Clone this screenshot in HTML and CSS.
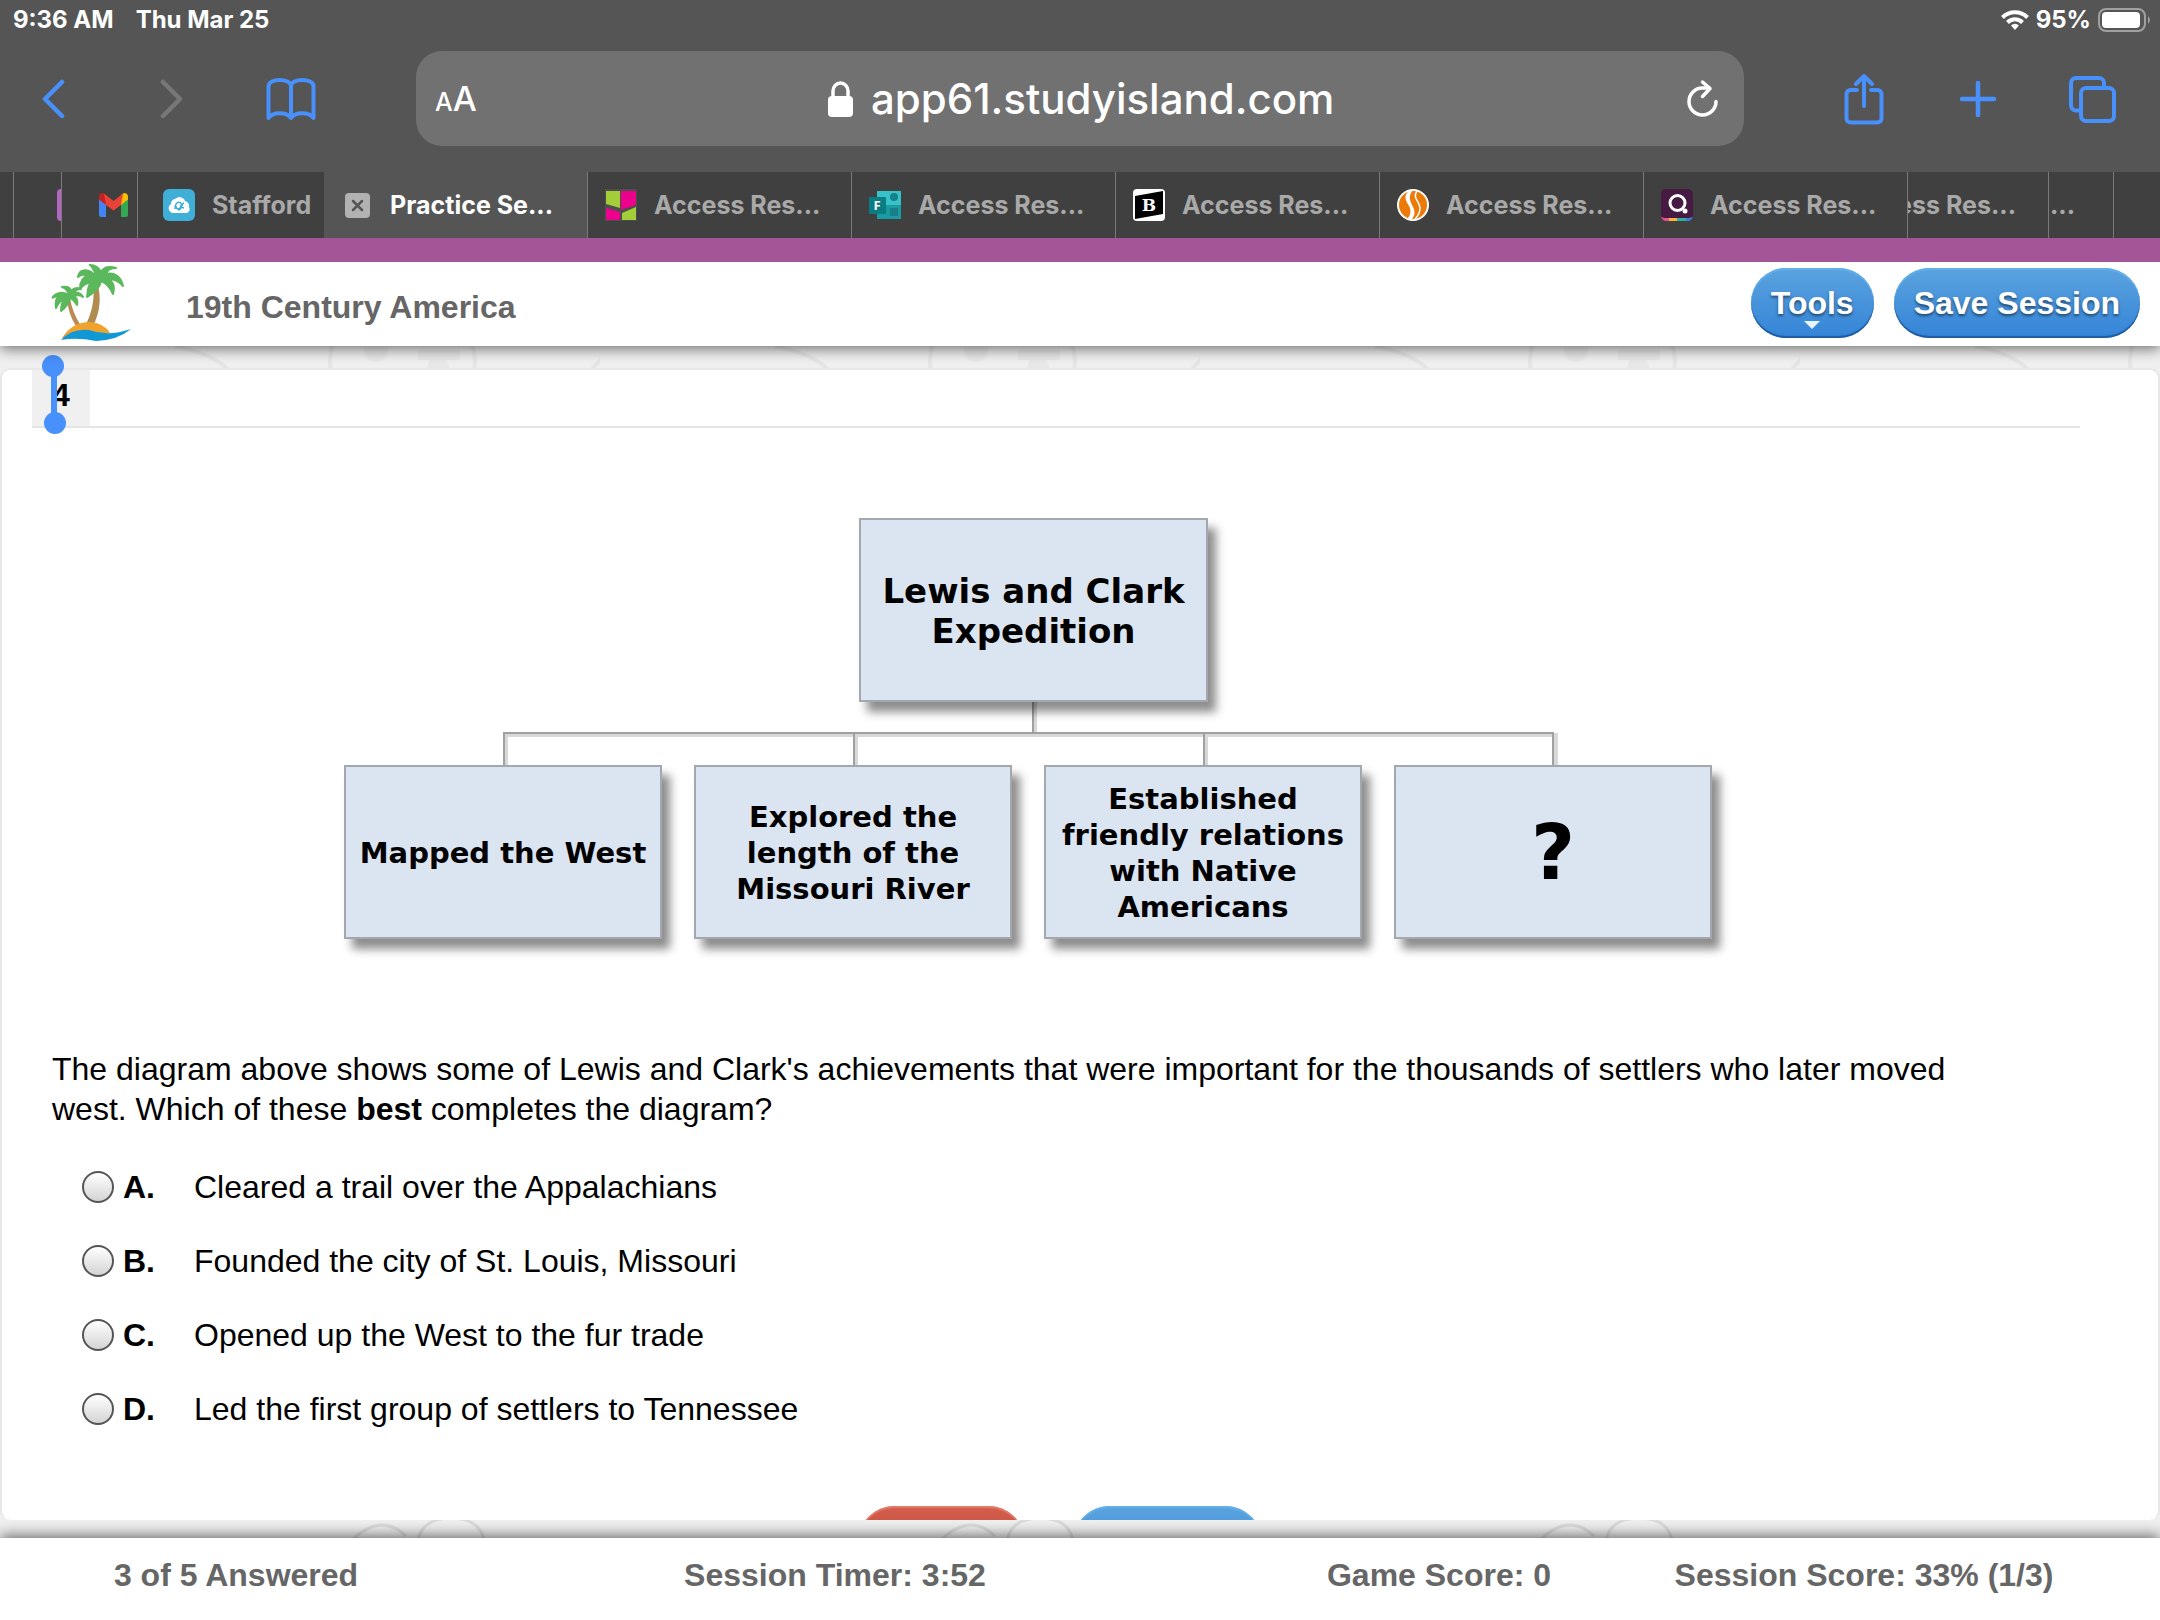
FILE: index.html
```html
<!DOCTYPE html>
<html lang="en">
<head>
    <meta charset="UTF-8">
    <meta name="viewport" content="width=device-width, initial-scale=1.0">
    <title>Practice Session</title>
    <link rel="stylesheet" href="styles.css">
</head>
<body>
    <div class="browser">
        <div class="status-bar">
            <span>9:36 AM</span>
            <span>Thu Mar 25</span>
            <div class="status-right">
                <svg width="28" height="22" viewBox="0 0 28 22">
                    <g fill="none" stroke="#fff" stroke-width="4">
                        <path d="M1.500 8.500a17.500 17.500 0 0 1 25 0"/>
                        <path d="M6.500 13.500a10.500 10.500 0 0 1 15 0"/>
                    </g>
                    <path d="M14 21l-4-4.500a5.600 5.600 0 0 1 8 0z" fill="#fff"/>
                </svg>
                <span>95%</span>
                <svg width="54" height="24" viewBox="0 0 54 24">
                    <rect x="1" y="1" width="46" height="22" rx="7" fill="none" stroke="#a0a0a0" stroke-width="2"/>
                    <rect x="4" y="4" width="38" height="16" rx="4" fill="#fff"/>
                    <path d="M50 8q4 4 0 8z" fill="#a0a0a0"/>
                </svg>
            </div>
        </div>

        <div class="toolbar">
            <div class="toolbar-group left">
                <button type="button" aria-label="Back">
                    <svg width="24" height="40" viewBox="0 0 24 40"><path d="M21 3L4 20l17 17" fill="none" stroke="#4890fb" stroke-width="4.500" stroke-linecap="round" stroke-linejoin="round"/></svg>
                </button>
                <button type="button" aria-label="Forward">
                    <svg width="24" height="40" viewBox="0 0 24 40"><path d="M3 3l17 17L3 37" fill="none" stroke="#777" stroke-width="4.500" stroke-linecap="round" stroke-linejoin="round"/></svg>
                </button>
                <button type="button" aria-label="Bookmarks">
                    <svg width="50" height="44" viewBox="0 0 50 44"><path d="M2.500 41V9c0-8 22.500-8 22.500 0v32C21 34.500 6.500 34.500 2.500 41zM25 9c0-8 22.500-8 22.500 0v32C43.500 34.500 29 34.500 25 41" fill="none" stroke="#4890fb" stroke-width="4" stroke-linejoin="round"/></svg>
                </button>
            </div>
            <div class="address-bar">
                <button type="button" class="text-size" aria-label="Text size"><small>A</small>A</button>
                <div class="address">
                    <svg width="25" height="36" viewBox="0 0 25 36">
                        <path d="M5 17V10a7.500 8 0 0 1 15 0v7" fill="none" stroke="#fff" stroke-width="3.500"/>
                        <rect x="0" y="15" width="25" height="21" rx="4" fill="#fff"/>
                    </svg>
                    <input type="text" aria-label="Address" value="app61.studyisland.com">
                </div>
                <button type="button" class="reload" aria-label="Reload">
                    <svg width="34" height="40" viewBox="0 0 34 40">
                        <path d="M30 22.500a13.500 13.500 0 1 1-13.500-13.500h7" fill="none" stroke="#fff" stroke-width="3.500" stroke-linecap="round"/>
                        <path d="M16.500 3l7.500 6.500-7.500 8" fill="none" stroke="#fff" stroke-width="3.500" stroke-linecap="round" stroke-linejoin="round"/>
                    </svg>
                </button>
            </div>
            <div class="toolbar-group">
                <button type="button" aria-label="Share">
                    <svg width="40" height="52" viewBox="0 0 40 52"><path d="M13 17H6.500a4 4 0 0 0-4 4v24.500a4 4 0 0 0 4 4h27a4 4 0 0 0 4-4V21a4 4 0 0 0-4-4H27M20 33V4M12 11l8-8 8 8" fill="none" stroke="#4890fb" stroke-width="4" stroke-linecap="round" stroke-linejoin="round"/></svg>
                </button>
                <button type="button" aria-label="New tab">
                    <svg width="36" height="36" viewBox="0 0 36 36"><path d="M18 2v32M2 18h32" stroke="#4890fb" stroke-width="4.500" stroke-linecap="round"/></svg>
                </button>
                <button type="button" aria-label="Show tabs">
                    <svg width="48" height="48" viewBox="0 0 48 48" fill="none" stroke="#4890fb" stroke-width="4">
                        <rect x="13" y="13" width="33" height="33" rx="5"/>
                        <path d="M13 35.500H8a5 5 0 0 1-5-5V8a5 5 0 0 1 5-5h23a5 5 0 0 1 5 5v5"/>
                    </svg>
                </button>
            </div>
        </div>

        <nav class="tabs">
            <a href="#" class="tab edge-left" aria-label="Tab"></a>
            <a href="#" class="tab sliver" aria-label="Tab"><i></i></a>
            <a href="#" class="tab gmail" aria-label="Gmail">
                <svg width="29" height="24" viewBox="0 0 29 24">
                    <path d="M0 4v18q0 2 2 2h5V10z" fill="#4285f4"/>
                    <path d="M29 4v18q0 2-2 2h-5V10z" fill="#34a853"/>
                    <path d="M0 4q0-4 4-4l3 2v10L0 6.500z" fill="#c5221f"/>
                    <path d="M29 4q0-4-4-4l-3 2v10l7-5.500z" fill="#fbbc04"/>
                    <path d="M5 .500L14.500 8 24 .500 22 12l-7.500 5.500L7 12z" fill="#ea4335"/>
                </svg>
            </a>
            <a href="#" class="tab stafford">
                <svg width="32" height="32" viewBox="0 0 32 32">
                    <rect width="32" height="32" rx="6" fill="#3fafd7"/>
                    <path d="M9 24a5 5 0 0 1-1-9 5 5 0 0 1 4-5 6 6 0 0 1 10 2 5 5 0 0 1 4 6 4 4 0 0 1-2 6z" fill="#fff"/>
                    <path d="M12 20c0-9 8-8 6-3-1 4-5 4-5 0m2 4c5 0 3-7 6-7m-3 4l3 1" fill="none" stroke="#3fafd7" stroke-width="1.500"/>
                </svg>
                <span>Stafford</span>
            </a>
            <a href="#" class="tab active">
                <svg width="32" height="32" viewBox="0 0 32 32">
                    <rect x="4" y="4" width="25" height="25" rx="4" fill="#b2b2b2"/>
                    <path d="M12 12l9 9M21 12l-9 9" stroke="#555" stroke-width="2.500" stroke-linecap="round"/>
                </svg>
                <span>Practice Se...</span>
            </a>
            <a href="#" class="tab">
                <svg width="32" height="32" viewBox="0 0 32 32">
                    <rect width="32" height="32" fill="#4d4d4d"/>
                    <path d="M1 2h14v17L1 15z" fill="#a4ce39"/>
                    <path d="M16 2h15v14l-15 5z" fill="#ec008c"/>
                    <path d="M1 19l14 4v8H1z" fill="#ec008c"/>
                    <path d="M17 24l14-6v13H17z" fill="#a4ce39"/>
                </svg>
                <span>Access Res...</span>
            </a>
            <a href="#" class="tab">
                <svg width="32" height="32" viewBox="0 0 32 32">
                    <path d="M8 2h24v14H8z" fill="#37c2c9"/>
                    <path d="M8 16h24v14H8z" fill="#1a9ba1"/>
                    <circle cx="25" cy="8" r="4" fill="#17808c"/>
                    <path d="M21 19h8v8h-8z" fill="#19808a"/>
                    <rect y="8" width="17" height="17" rx="1" fill="#0a7c84"/>
                    <text x="8" y="21" class="icon-f">F</text>
                </svg>
                <span>Access Res...</span>
            </a>
            <a href="#" class="tab">
                <svg width="32" height="32" viewBox="0 0 32 32">
                    <rect width="32" height="32" rx="4" fill="#fff"/>
                    <path d="M2 7l28-5v23L2 30z" fill="#000"/>
                    <text x="16" y="22" class="icon-b">B</text>
                </svg>
                <span>Access Res...</span>
            </a>
            <a href="#" class="tab">
                <svg width="32" height="32" viewBox="0 0 32 32">
                    <circle cx="16" cy="16" r="15" fill="#ec7a08" stroke="#fff" stroke-width="2"/>
                    <path d="M13 1c-9 7-2 13 0 18 1 5 0 8-3 11l4 1c5-5 4-10 1-15-3-6-3-10 1-15z" fill="#fff"/>
                    <path d="M20 2c-5 7 3 11 3 17 0 5-2 8-5 11" fill="none" stroke="#fff" stroke-width="1.500"/>
                </svg>
                <span>Access Res...</span>
            </a>
            <a href="#" class="tab">
                <svg width="32" height="32" viewBox="0 0 32 32">
                    <rect width="32" height="32" rx="5" fill="#461a42"/>
                    <path d="M0 27q1 5 5 5h3v-3H5q-4 0-5-2z" fill="#e2558c"/>
                    <path d="M8 29h8v3H8z" fill="#f9b233"/>
                    <path d="M16 29h9v3h-9z" fill="#2eb0a5"/>
                    <path d="M25 29q6 0 7-2-1 5-5 5h-2z" fill="#3f7fd0"/>
                    <circle cx="16.500" cy="14" r="7.500" fill="none" stroke="#fff" stroke-width="3"/>
                    <circle cx="24" cy="22" r="2.500" fill="#fff"/>
                </svg>
                <span>Access Res...</span>
            </a>
            <a href="#" class="tab cut"><span>Access Res...</span></a>
            <a href="#" class="tab dots">...</a>
            <a href="#" class="tab edge-right" aria-label="Tab"></a>
        </nav>
    </div>

    <header>
        <svg class="logo" width="80" height="78" viewBox="0 0 80 78">
            <path d="M45 18q7 22-4 44h-8q11-20 8-44z" fill="#b08c50"/>
            <path d="M15 34q1 16 9 28h5q-9-14-11-28z" fill="#b98a52"/>
            <g fill="#5cb85c" stroke="#5cb85c" stroke-width="2" stroke-linejoin="round">
                <path d="M46 14C40 2 37-1 38 1c6 0 9 3 11 7 3-5 8-6 15-4-6 0-9 3-10 6 8-2 15 2 17 12-5-6-9-7-14-7 4 3 6 8 4 15-3-7-6-11-12-13-1 7-7 11-14 16 1-5 0-10 4-15-5 1-8 3-11 7 0-8 3-12 8-13-4-2-7-2-10 1 1-6 6-8 11-6 3 1 6 4 9 7z"/>
                <path d="M17 31c-1-5-4-7-7-8 5-1 8 0 9 4 3-3 6-4 10-2-4 0-6 2-7 4 4-1 7 0 9 4-3-2-6-2-9-1 3 2 4 5 3 9-2-3-4-6-7-7-1 5-4 9-9 13 0-5 1-9 4-12-4 1-7 4-9 9-1-6 0-10 4-12-3 0-5 0-8 2 3-5 9-7 17-3z"/>
            </g>
            <path d="M10 74Q20 58 38 58q14 1 20 11L40 72z" fill="#f0a22e"/>
            <path d="M9 76q11-12 28-10 19 7 42-1-13 11-35 12-19-4-35-1z" fill="#0f97d6"/>
        </svg>
        <h1>19th Century America</h1>
        <div class="header-buttons">
            <button type="button" class="pill tools">Tools</button>
            <button type="button" class="pill">Save Session</button>
        </div>
    </header>

    <main>
        <svg class="doodles" width="100%" height="100%">
            <defs>
                <pattern id="doodlesTop" x="0" y="0" width="600" height="24" patternUnits="userSpaceOnUse">
                    <g fill="none" stroke="#e6e6e6" stroke-width="4">
                        <path d="M175 0q40 8 55 26M590 26q8-12 20-18"/>
                        <path d="M334-4q-6 12-3 30M470-4q7 12 4 30"/>
                    </g>
                    <path d="M364 0h24q2 14-12 16-14-2-12-16zM418 4h42v10h-14l4 10h-24l4-10h-12z" fill="#e8e8e8"/>
                </pattern>
            </defs>
            <rect width="100%" height="24" fill="url(#doodlesTop)"/>
            <svg y="100%" overflow="visible">
                <g fill="none" stroke="#dcdcdc" stroke-width="3">
                    <path d="M352 2q29-28 54-4M418 2q5-22 33-22t33 22"/>
                    <path d="M941 2q29-28 54-4M1007 2q5-22 33-22t33 22"/>
                    <path d="M1540 2q29-28 54-4M1606 2q5-22 33-22t33 22"/>
                </g>
            </svg>
        </svg>
        <form class="panel">
            <div class="question-bar">
                <div class="question-number">4
                    <span class="selection"></span>
                </div>
            </div>

            <div class="diagram">
                <svg class="lines" width="1366" height="420" fill="none">
                    <path d="M691 184v34M162 248v-31h1050v31M512 218v30M862 218v30" stroke="#d8d8d8" stroke-width="4"/>
                    <path d="M689 184v32M160 248v-33h1049v33M510 215v33M860 215v33" stroke="#a0a0a0" stroke-width="2"/>
                </svg>
                <div class="node root">Lewis and Clark Expedition</div>
                <div class="node mapped">Mapped the West</div>
                <div class="node explored">Explored the length of the Missouri River</div>
                <div class="node established">Established friendly relations with Native Americans</div>
                <div class="node unknown">?</div>
            </div>

            <p class="question">The diagram above shows some of Lewis and Clark's achievements that were important for the thousands of settlers who later moved west. Which of these <b>best</b> completes the diagram?</p>

            <div class="answers">
                <label><input type="radio" name="answer" value="A"><b>A.</b> Cleared a trail over the Appalachians</label>
                <label><input type="radio" name="answer" value="B"><b>B.</b> Founded the city of St. Louis, Missouri</label>
                <label><input type="radio" name="answer" value="C"><b>C.</b> Opened up the West to the fur trade</label>
                <label><input type="radio" name="answer" value="D"><b>D.</b> Led the first group of settlers to Tennessee</label>
            </div>

            <div class="actions">
                <button type="button" class="pill quit" aria-label="Quit"></button>
                <button type="submit" class="pill submit" aria-label="Submit"></button>
            </div>
        </form>
    </main>

    <footer>
        <span>3 of 5 Answered</span>
        <span>Session Timer: 3:52</span>
        <span>Game Score: 0</span>
        <span>Session Score: 33% (1/3)</span>
    </footer>
</body>
</html>
```
FILE: styles.css
```css
* {
    box-sizing: border-box;
}
body {
    font-family: "Liberation Sans", Arial, sans-serif;
    font-size: 32px;
    line-height: 40px;
    margin: 0;
    height: 100vh;
    display: flex;
    flex-direction: column;
    background-color: #f0f0f0;
    color: #000;
    overflow: hidden;
}
button, input {
    font: inherit;
    margin: 0;
    padding: 0;
    border: none;
    background: none;
    color: inherit;
}
button {
    cursor: pointer;
}
svg {
    display: block;
    flex-shrink: 0;
}

/* browser chrome */
.browser {
    background-color: #555;
    color: #fff;
    font-family: Inter, sans-serif;
    border-bottom: 24px solid #a35598;
}
.status-bar {
    display: flex;
    align-items: center;
    gap: 22px;
    height: 40px;
    padding: 0 8px 0 13px;
    font-size: 24px;
    font-weight: 700;
}
.status-right {
    display: flex;
    align-items: center;
    gap: 7px;
    margin-left: auto;
}
.toolbar {
    display: flex;
    align-items: center;
    padding: 11px 38px 26px 23px;
}
.toolbar-group {
    display: flex;
    gap: 54px;
}
.toolbar-group.left {
    gap: 59px;
}
.toolbar-group button {
    width: 60px;
    height: 60px;
    display: flex;
    align-items: center;
    justify-content: center;
}
.address-bar {
    flex: 1;
    display: flex;
    align-items: center;
    justify-content: space-between;
    height: 95px;
    margin: 0 90px 0 95px;
    padding: 0 24px 0 19px;
    border-radius: 26px;
    background-color: #717171;
}
.text-size {
    padding-top: 4px;
    font-size: 34px;
    font-weight: 500;
}
.text-size small {
    font-size: 25px;
}
.address {
    display: flex;
    align-items: center;
    gap: 18px;
}
.address input {
    width: 464px;
    font-size: 42px;
    font-weight: 500;
}

/* tab strip */
.tabs {
    display: flex;
    height: 66px;
    background-color: #404040;
    font-size: 25px;
    font-weight: 700;
}
.tab {
    flex: 1;
    display: flex;
    align-items: center;
    gap: 17px;
    padding-left: 17px;
    border-right: 1px solid #7a7a7a;
    color: #a9a9a9;
    text-decoration: none;
    white-space: nowrap;
    overflow: hidden;
}
.tab.active {
    background-color: #555;
    color: #fff;
}
.edge-left {
    flex: 0 0 14px;
    padding: 0;
}
.sliver {
    flex: 0 0 48px;
    padding: 0;
    justify-content: flex-end;
}
.sliver i {
    width: 4px;
    height: 32px;
    border-radius: 4px 0 0 4px;
    background-color: #b565c4;
}
.gmail {
    flex: 0 0 76px;
    padding-left: 37px;
}
.stafford {
    flex: 0 0 186px;
    padding-left: 25px;
    border-right: none;
}
.tab.cut {
    flex: 0 0 141px;
    justify-content: flex-end;
    padding: 0 32px 0 0;
}
.tab.cut span {
    margin-left: -60px;
}
.dots {
    flex: 0 0 65px;
    padding-left: 1px;
}
.edge-right {
    flex: 0 0 46px;
    padding: 0;
    border-right: none;
}
.icon-f, .icon-b {
    fill: #fff;
    text-anchor: middle;
}
.icon-f {
    font: bold 13px "Open Sans", sans-serif;
}
.icon-b {
    font: bold 17px "DejaVu Serif", serif;
}

/* page header */
header {
    position: relative;
    display: flex;
    align-items: center;
    height: 84px;
    padding: 0 20px 2px 52px;
    background-color: #fff;
    box-shadow: 0 2px 14px rgba(0, 0, 0, 0.6);
    clip-path: inset(0 0 -22px 0);
}
h1 {
    margin: 8px 0 0 54px;
    font-size: 32px;
    line-height: 40px;
    color: #666;
}
.header-buttons {
    display: flex;
    gap: 20px;
    margin-left: auto;
}
.pill {
    position: relative;
    height: 70px;
    padding: 0 20px;
    border-radius: 35px;
    background: linear-gradient(#5ba3de, #3484d8);
    box-shadow: inset 0 2px 1px #62b0ea, inset 0 -2px 1px #1f5aa0;
    color: #fff;
    font-weight: bold;
    text-shadow: 0 2px 3px rgba(0, 0, 0, 0.5);
}
.tools::after {
    content: "";
    position: absolute;
    left: 50%;
    bottom: 9px;
    margin-left: -8px;
    border: 8px solid transparent;
    border-top-color: #e8f4ff;
    border-bottom: none;
}

/* question */
main {
    position: relative;
    flex: 1;
    min-height: 0;
    display: flex;
    padding: 22px 0 18px;
    z-index: -1;
}
.doodles {
    position: absolute;
    top: 0;
    left: 0;
}
.panel {
    position: relative;
    flex: 1;
    border: 2px solid #e7e7e7;
    border-bottom: none;
    border-radius: 10px;
    background-color: #fff;
    /* cuts the bottom buttons but lets the selection handle stick out on top */
    clip-path: inset(-20px 0 0 0 round 10px);
}
.question-bar {
    margin: 0 78px 0 30px;
    border-bottom: 2px solid #e5e5e5;
}
.question-number {
    position: relative;
    width: 58px;
    height: 56px;
    padding: 5px 0 0 20px;
    background-color: #f0f0f0;
    font-weight: bold;
}
.selection {
    position: absolute;
    top: 0;
    left: 19px;
    width: 6px;
    height: 50px;
    background-color: #4890fb;
}
.selection::before, .selection::after {
    content: "";
    position: absolute;
    width: 22px;
    height: 22px;
    border-radius: 50%;
    background-color: #4890fb;
}
.selection::before {
    top: -15px;
    left: -9px;
}
.selection::after {
    bottom: -14px;
    left: -7px;
}
.diagram {
    position: relative;
    width: 1366px;
    height: 420px;
    margin: 90px auto 0;
    left: -53px;
}
.lines {
    position: absolute;
    top: 0;
    left: 0;
}
.node {
    position: absolute;
    top: 247px;
    width: 318px;
    height: 174px;
    display: flex;
    align-items: center;
    justify-content: center;
    padding: 2px 8px 0;
    border: 2px solid #a3a8ae;
    background-color: #dbe5f1;
    box-shadow: 8px 10px 9px rgba(0, 0, 0, 0.45);
    font-family: "DejaVu Sans", Verdana, sans-serif;
    font-size: 29px;
    line-height: 36px;
    font-weight: bold;
    text-align: center;
}
.root {
    top: 0;
    left: 515px;
    width: 349px;
    height: 184px;
    font-size: 34px;
    line-height: 40px;
}
.mapped {
    left: 0;
}
.explored {
    left: 350px;
    padding: 2px 30px 0;
}
.established {
    left: 700px;
}
.unknown {
    left: 1050px;
    font-size: 76px;
}
.question {
    margin: 111px 156px 0 50px;
}
.answers {
    display: flex;
    flex-direction: column;
    gap: 34px;
    margin: 38px 0 0 80px;
}
.answers label {
    display: flex;
    align-items: center;
}
.answers b {
    width: 71px;
}
.answers input {
    appearance: none;
    width: 32px;
    height: 32px;
    margin-right: 9px;
    border: 2px solid #555;
    border-radius: 50%;
    background: linear-gradient(#fff, #d4d4d4);
}
.actions {
    display: flex;
    justify-content: center;
    gap: 50px;
    margin: 77px 40px 0 0;
}
.quit {
    width: 165px;
    background: linear-gradient(#d45d4c, #b94a36);
    box-shadow: inset 0 2px 1px #e37a6a;
}
.submit {
    width: 187px;
}

footer {
    display: grid;
    grid-template-columns: minmax(0, 472fr) minmax(0, 726fr) minmax(0, 482fr) minmax(0, 368fr);
    align-items: center;
    justify-items: center;
    height: 82px;
    padding: 0 112px 8px 0;
    background-color: #fff;
    box-shadow: 0 -2px 14px rgba(0, 0, 0, 0.6);
    clip-path: inset(-18px 0 0 0);
    color: #666;
    font-weight: bold;
    white-space: nowrap;
}
```
